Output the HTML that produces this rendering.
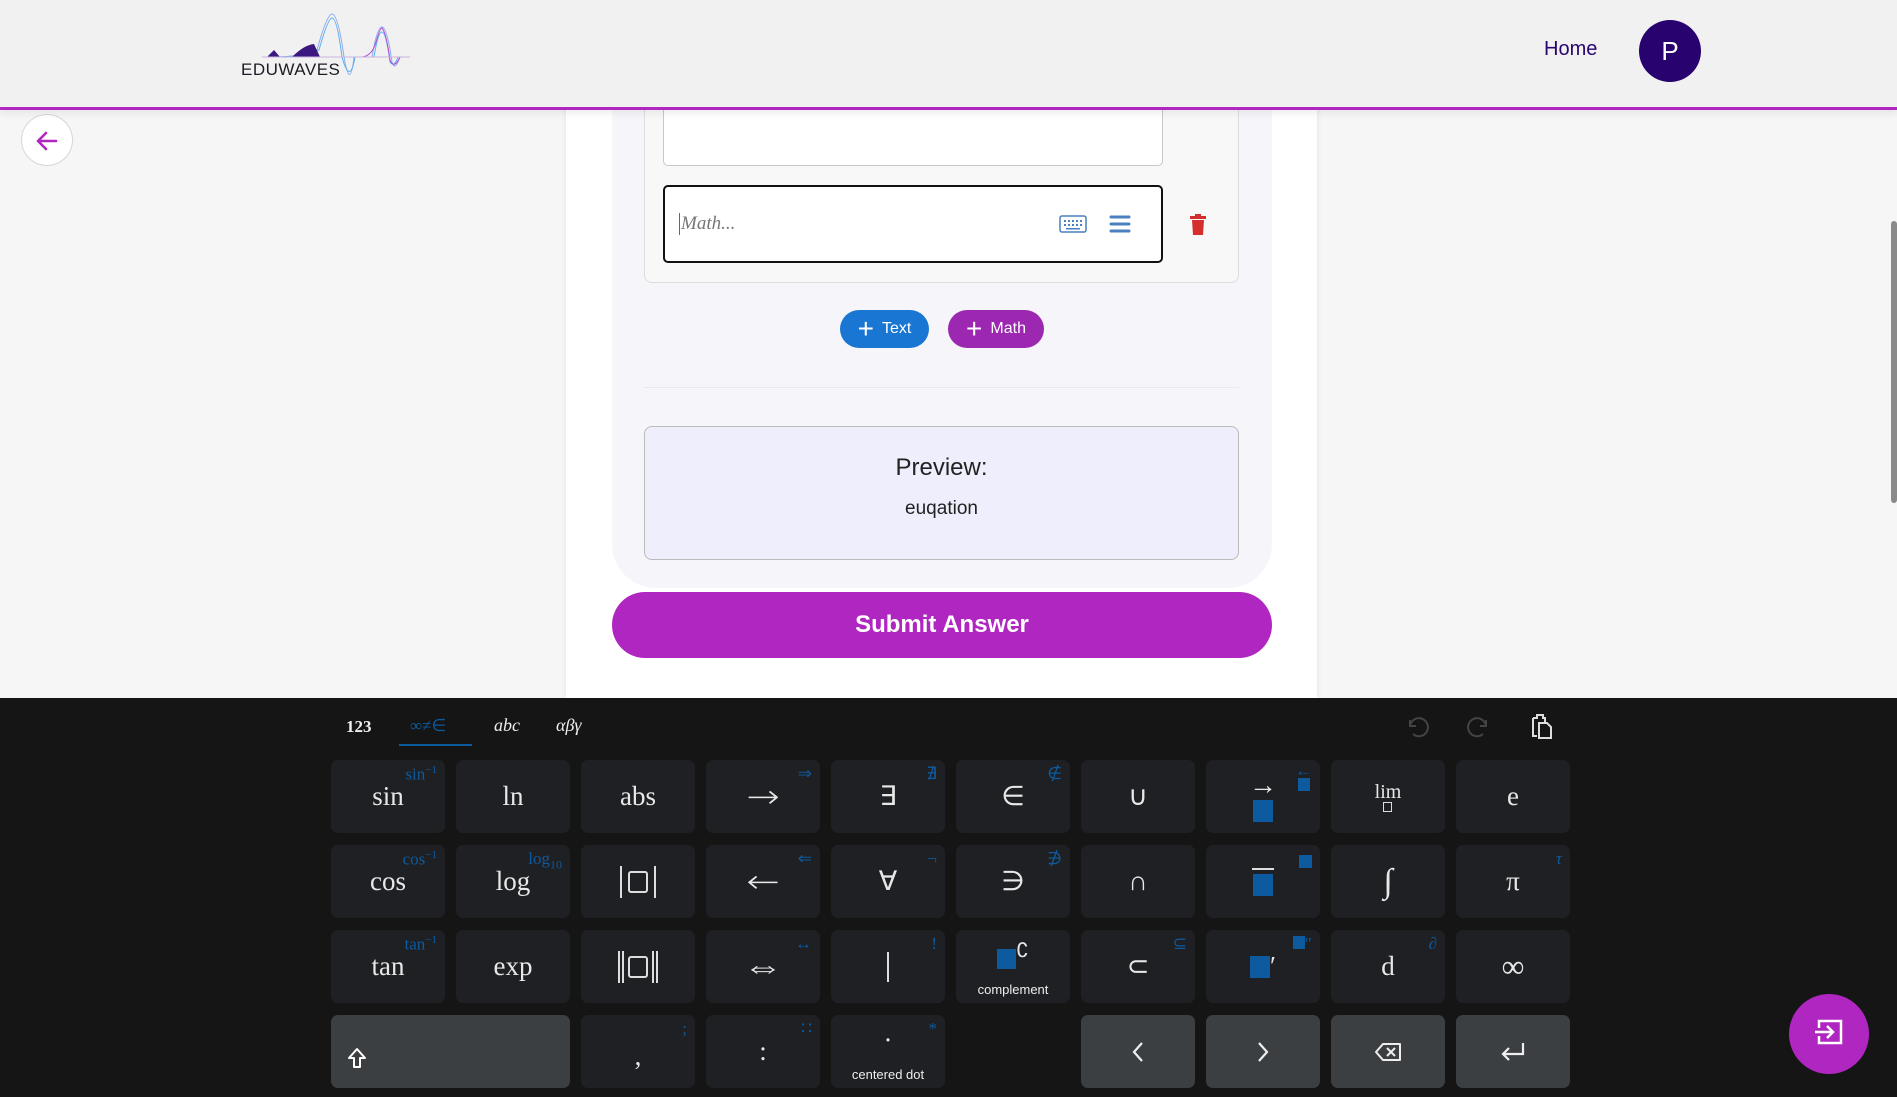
<!DOCTYPE html>
<html><head><meta charset="utf-8"><style>
*{box-sizing:border-box;margin:0;padding:0}
body{width:1897px;height:1097px;overflow:hidden;background:#f6f6f6;font-family:"Liberation Sans",sans-serif;position:relative}
.abs{position:absolute}
#hdr{left:0;top:0;width:1897px;height:110px;background:#f1f1f1;border-bottom:3px solid #b026c0;box-shadow:0 3px 8px rgba(0,0,0,.08);z-index:5}
#col{left:566px;top:0;width:751px;height:698px;background:#fff;box-shadow:0 0 6px rgba(0,0,0,.08)}
#card{left:612px;top:0;width:660px;height:588px;background:#f6f6fa;border-radius:0 0 44px 44px}
#box{left:644px;top:60px;width:595px;height:223px;background:#f8f8f8;border:1px solid #ddd;border-radius:8px}
.kb{left:0;top:698px;width:1897px;height:399px;background:#151515}
.key{position:absolute;width:114px;height:73px;background:#1f2023;border-radius:7px;color:#e8e8e8;font-family:"Liberation Serif",serif;font-size:27px;display:flex;align-items:center;justify-content:center}
.key.a{background:#3c3f42}
.sh{position:absolute;right:8px;top:4px;color:#0d5a9e;font-size:17px;font-family:"Liberation Serif",serif}
.sq{display:inline-block;background:#0d5a9e}
.lbl{position:absolute;bottom:6px;left:0;right:0;text-align:center;font-family:"Liberation Sans",sans-serif;font-size:13px;color:#eee}
.ar{font-size:40px;font-family:"DejaVu Sans",sans-serif;font-weight:200;transform:scaleY(.8)}
.bar{display:inline-block;width:2px;height:32px;background:#ddd;margin:0 3px}
.bx{display:inline-block;width:20px;height:22px;border:2px solid #ddd;border-radius:3px;margin:0 3px}
</style></head><body>
<div id="hdr" class="abs">
  <svg class="abs" style="left:262px;top:12px" width="150" height="75" viewBox="0 0 150 75">
    <g fill="none" stroke-width="1">
      <path d="M10 45 Q40 45 55 38 Q65 2 70 2 Q76 2 82 45 Q88 80 92 45 L110 45 Q115 15 120 15 Q125 15 130 50 Q133 60 138 45 L148 45" stroke="#8fa8f0"/>
      <path d="M12 45 Q42 45 57 38 Q66 6 70 6 Q75 6 80 45 Q88 74 93 45 L112 45 Q116 20 120 20 Q124 20 128 50 Q132 56 136 45" stroke="#5ab0f0"/>
      <path d="M100 45 Q110 44 114 30 Q118 16 120 16 Q124 20 128 48 Q132 58 138 45" stroke="#b04cd0"/>
    </g>
    <path d="M5 45 L12 38 L18 45Z M30 45 Q42 33 52 32 L58 45Z" fill="#3b1780"/>
    <line x1="0" y1="45" x2="148" y2="45" stroke="#c9b3e0" stroke-width="1"/>
  </svg>
  <div class="abs" style="left:241px;top:60px;font-size:17px;color:#1c1c24;letter-spacing:.5px">EDUWAVES</div>
  <div class="abs" style="left:1544px;top:38px;font-size:20px;color:#2a0470">Home</div>
  <div class="abs" style="left:1639px;top:20px;width:62px;height:62px;border-radius:50%;background:#28036f;color:#fff;font-size:26px;display:flex;align-items:center;justify-content:center">P</div>
</div>
<div class="abs" style="left:21px;top:114px;width:52px;height:52px;border-radius:50%;background:#fff;border:1px solid #d6d6d6">
  <svg width="52" height="52" viewBox="0 0 52 52"><path d="M34 26H16M24 18l-8 8 8 8" fill="none" stroke="#b026c0" stroke-width="2.6" stroke-linecap="round" stroke-linejoin="round"/></svg>
</div>
<div id="col" class="abs"></div>
<div id="card" class="abs"></div>
<div id="box" class="abs"></div>
<div class="abs" style="left:663px;top:90px;width:500px;height:76px;background:#fff;border:1px solid #c8c8c8;border-radius:0 0 5px 5px"></div>
<div class="abs" style="left:1194px;top:104px;width:10px;height:4px;background:#d32f2f"></div>
<div class="abs" style="left:663px;top:185px;width:500px;height:78px;background:#fff;border:2px solid #111;border-radius:5px">
  <div class="abs" style="left:14px;top:26px;font-family:'Liberation Serif',serif;font-style:italic;font-size:19px;color:#777;border-left:1px solid #3a6fb0;padding-left:1px">Math...</div>
  <svg class="abs" style="left:394px;top:28px" width="28" height="18" viewBox="0 0 28 18"><rect x="1" y="1" width="26" height="16" rx="2" fill="none" stroke="#4a7fc0" stroke-width="1.5"/><g fill="#4a7fc0"><rect x="5" y="5" width="2" height="2"/><rect x="9" y="5" width="2" height="2"/><rect x="13" y="5" width="2" height="2"/><rect x="17" y="5" width="2" height="2"/><rect x="21" y="5" width="2" height="2"/><rect x="5" y="9" width="2" height="2"/><rect x="9" y="9" width="2" height="2"/><rect x="13" y="9" width="2" height="2"/><rect x="17" y="9" width="2" height="2"/><rect x="21" y="9" width="2" height="2"/><rect x="7" y="13" width="14" height="1.5"/></g></svg>
  <svg class="abs" style="left:444px;top:27px" width="22" height="20" viewBox="0 0 22 20"><g stroke="#4a7fc0" stroke-width="3" stroke-linecap="round"><line x1="2" y1="3" x2="20" y2="3"/><line x1="2" y1="10" x2="20" y2="10"/><line x1="2" y1="17" x2="20" y2="17"/></g></svg>
</div>
<svg class="abs" style="left:1190px;top:214px" width="16" height="21" viewBox="0 0 16 21"><rect x="0" y="2" width="16" height="3" fill="#d32f2f"/><rect x="5" y="0" width="6" height="3" fill="#d32f2f"/><path d="M2 6h12l-1 15H3z" fill="#d32f2f"/></svg>
<div class="abs" style="left:840px;top:310px;width:89px;height:38px;border-radius:19px;background:#1976d2;color:#fff;font-size:16px;display:flex;align-items:center;justify-content:center;gap:8px"><span style="font-size:28px;font-weight:300;line-height:1">+</span>Text</div>
<div class="abs" style="left:948px;top:310px;width:96px;height:38px;border-radius:19px;background:#9c27b0;color:#fff;font-size:16px;display:flex;align-items:center;justify-content:center;gap:8px"><span style="font-size:28px;font-weight:300;line-height:1">+</span>Math</div>
<div class="abs" style="left:644px;top:387px;width:595px;height:1px;background:#e8e8ee"></div>
<div class="abs" style="left:644px;top:426px;width:595px;height:134px;background:#eeeefc;border:1px solid #bbb;border-radius:8px;text-align:center">
  <div style="margin-top:27px;font-size:24px;color:#222">Preview:</div>
  <div style="margin-top:16px;font-size:19px;color:#222">euqation</div>
</div>
<div class="abs" style="left:612px;top:592px;width:660px;height:66px;border-radius:33px;background:#b026c0;color:#fff;font-size:24px;font-weight:bold;display:flex;align-items:center;justify-content:center">Submit Answer</div>
<div class="abs" style="left:1891px;top:221px;width:6px;height:282px;background:#8a8a8a;border-radius:3px"></div>

<div class="abs kb">
  <div class="abs" style="left:346px;top:19px;color:#eee;font-family:'Liberation Serif',serif;font-size:17px;font-weight:bold">123</div>
  <div class="abs" style="left:410px;top:18px;color:#0d5a9e;font-family:'Liberation Serif',serif;font-size:17px">∞≠∈</div>
  <div class="abs" style="left:399px;top:46px;width:73px;height:2px;background:#0d5a9e"></div>
  <div class="abs" style="left:494px;top:17px;color:#eee;font-family:'Liberation Serif',serif;font-size:18px;font-style:italic">abc</div>
  <div class="abs" style="left:556px;top:17px;color:#eee;font-family:'Liberation Serif',serif;font-size:18px;font-style:italic">αβγ</div>
  <svg class="abs" style="left:1404px;top:16px" width="26" height="26" viewBox="0 0 26 26"><path d="M6 6v6h6M6 12a9 9 0 1 1 3 8" fill="none" stroke="#444" stroke-width="2"/></svg>
  <svg class="abs" style="left:1466px;top:16px" width="26" height="26" viewBox="0 0 26 26"><path d="M20 6v6h-6M20 12a9 9 0 1 0 -3 8" fill="none" stroke="#444" stroke-width="2"/></svg>
  <svg class="abs" style="left:1529px;top:15px" width="26" height="28" viewBox="0 0 26 28"><path d="M4 5h4v-3h6v3h2v4M8 23H4V5" fill="none" stroke="#ddd" stroke-width="2"/><path d="M10 10h8l4 4v11H10z" fill="none" stroke="#ddd" stroke-width="2"/></svg>
</div>

<div class="key" style="left:331px;top:760px">sin<span class="sh">sin<sup style="font-size:11px">−1</sup></span></div>
<div class="key" style="left:456px;top:760px">ln</div>
<div class="key" style="left:581px;top:760px">abs</div>
<div class="key" style="left:706px;top:760px"><span class="ar">→</span><span class="sh">⇒</span></div>
<div class="key" style="left:831px;top:760px">∃<span class="sh">∄</span></div>
<div class="key" style="left:956px;top:760px">∈<span class="sh">∉</span></div>
<div class="key" style="left:1081px;top:760px">∪</div>
<div class="key" style="left:1206px;top:760px"><div style="display:flex;flex-direction:column;align-items:center;line-height:1"><span style="font-size:28px">→</span><span class="sq" style="width:20px;height:22px"></span></div><span class="sh" style="display:flex;flex-direction:column;align-items:center;line-height:.8"><span>←</span><span class="sq" style="width:12px;height:13px"></span></span></div>
<div class="key" style="left:1331px;top:760px"><div style="display:flex;flex-direction:column;align-items:center;line-height:1;font-size:20px">lim<span style="width:9px;height:10px;border:1.5px solid #ddd;display:inline-block"></span></div></div>
<div class="key" style="left:1456px;top:760px">e</div>

<div class="key" style="left:331px;top:845px">cos<span class="sh">cos<sup style="font-size:11px">−1</sup></span></div>
<div class="key" style="left:456px;top:845px">log<span class="sh">log<sub style="font-size:12px">10</sub></span></div>
<div class="key" style="left:581px;top:845px"><span class="bar"></span><span class="bx"></span><span class="bar"></span></div>
<div class="key" style="left:706px;top:845px"><span class="ar">←</span><span class="sh">⇐</span></div>
<div class="key" style="left:831px;top:845px">∀<span class="sh">¬</span></div>
<div class="key" style="left:956px;top:845px">∋<span class="sh">∌</span></div>
<div class="key" style="left:1081px;top:845px">∩</div>
<div class="key" style="left:1206px;top:845px"><div style="display:flex;flex-direction:column;align-items:center"><span style="width:22px;height:2px;background:#ddd;margin-bottom:4px"></span><span class="sq" style="width:20px;height:22px"></span></div><span class="sh" style="top:10px"><span class="sq" style="width:13px;height:13px;display:block;border-bottom:2px solid #0d5a9e"></span></span></div>
<div class="key" style="left:1331px;top:845px;font-style:italic;font-size:34px">∫</div>
<div class="key" style="left:1456px;top:845px">π<span class="sh" style="font-style:italic">τ</span></div>

<div class="key" style="left:331px;top:930px">tan<span class="sh">tan<sup style="font-size:11px">−1</sup></span></div>
<div class="key" style="left:456px;top:930px">exp</div>
<div class="key" style="left:581px;top:930px"><span class="bar" style="margin:0 1px"></span><span class="bar" style="margin:0 1px"></span><span class="bx"></span><span class="bar" style="margin:0 1px"></span><span class="bar" style="margin:0 1px"></span></div>
<div class="key" style="left:706px;top:930px"><span class="ar">⇔</span><span class="sh">↔</span></div>
<div class="key" style="left:831px;top:930px"><span class="bar" style="height:30px"></span><span class="sh">!</span></div>
<div class="key" style="left:956px;top:930px;align-items:flex-start;padding-top:8px"><div><span class="sq" style="width:19px;height:20px;vertical-align:bottom"></span><span style="font-size:20px;font-family:'Liberation Sans',sans-serif;vertical-align:top">∁</span></div><div class="lbl">complement</div></div>
<div class="key" style="left:1081px;top:930px">⊂<span class="sh">⊆</span></div>
<div class="key" style="left:1206px;top:930px"><span class="sq" style="width:20px;height:22px"></span>′<span class="sh"><span class="sq" style="width:12px;height:13px"></span>″</span></div>
<div class="key" style="left:1331px;top:930px">d<span class="sh" style="font-style:italic">∂</span></div>
<div class="key" style="left:1456px;top:930px;font-size:32px">∞</div>

<div class="key a" style="left:331px;top:1015px;width:239px;justify-content:flex-start;padding-left:16px;padding-top:14px"><svg width="20" height="24" viewBox="0 0 20 24"><path d="M10 2L2 11h5v9h6v-9h5z" fill="none" stroke="#fff" stroke-width="2" stroke-linejoin="round"/></svg></div>
<div class="key" style="left:581px;top:1015px;padding-top:10px">,<span class="sh">;</span></div>
<div class="key" style="left:706px;top:1015px">:<span class="sh">∷</span></div>
<div class="key" style="left:831px;top:1015px;align-items:flex-start;padding-top:10px">·<span class="sh">*</span><div class="lbl">centered dot</div></div>
<div class="key a" style="left:1081px;top:1015px"><svg width="16" height="24" viewBox="0 0 16 24"><path d="M12 3L4 12l8 9" fill="none" stroke="#eee" stroke-width="2.2"/></svg></div>
<div class="key a" style="left:1206px;top:1015px"><svg width="16" height="24" viewBox="0 0 16 24"><path d="M4 3l8 9-8 9" fill="none" stroke="#eee" stroke-width="2.2"/></svg></div>
<div class="key a" style="left:1331px;top:1015px"><svg width="28" height="20" viewBox="0 0 28 20"><path d="M9 2h17v16H9L2 10z" fill="none" stroke="#eee" stroke-width="2" stroke-linejoin="round"/><path d="M13 6l8 8M21 6l-8 8" stroke="#eee" stroke-width="2"/></svg></div>
<div class="key a" style="left:1456px;top:1015px"><svg width="28" height="22" viewBox="0 0 28 22"><path d="M24 2v11H4M10 7l-6 6 6 6" fill="none" stroke="#eee" stroke-width="2.2"/></svg></div>

<div class="abs" style="left:1789px;top:994px;width:80px;height:80px;border-radius:50%;background:#b026c0">
  <svg width="80" height="80" viewBox="0 0 80 80"><path d="M30 34v-7h22v22H30v-7" fill="none" stroke="#fff" stroke-width="2.5"/><path d="M26 38h17M38 32l6 6-6 6" fill="none" stroke="#fff" stroke-width="2.5"/></svg>
</div>
</body></html>
